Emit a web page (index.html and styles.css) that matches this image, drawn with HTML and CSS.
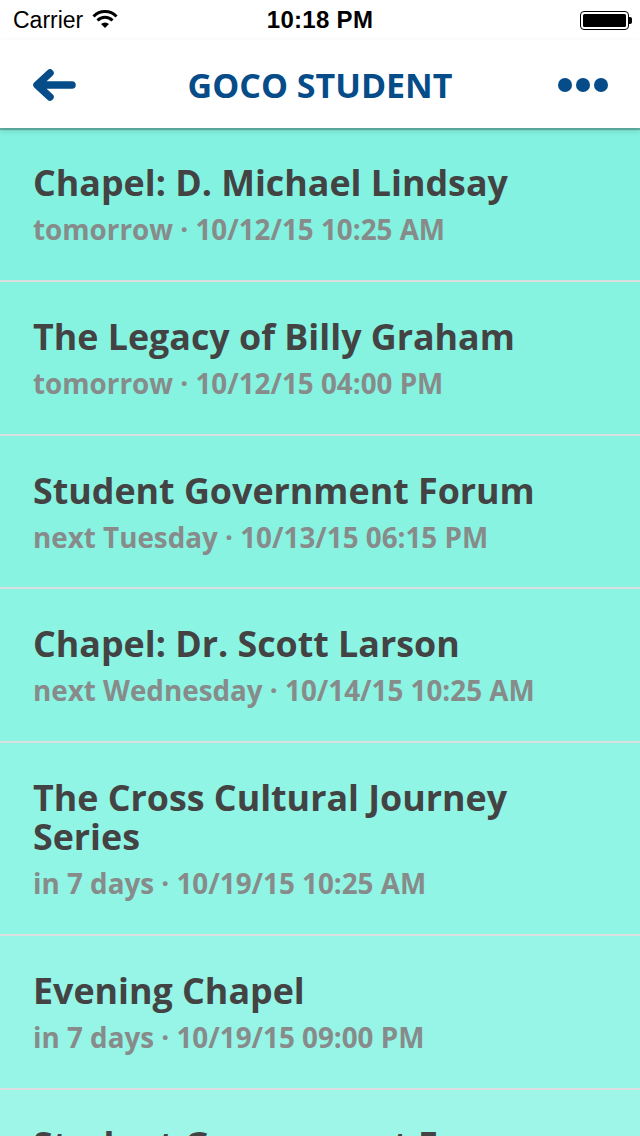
FILE: index.html
```html
<!DOCTYPE html>
<html>
<head>
<meta charset="utf-8">
<link rel="stylesheet" href="styles.css">
</head>
<body>
<div class="screen">
  <div class="statusbar">
    <div class="sb-left">
      <span class="carrier">Carrier</span>
      <svg class="wifi" width="26" height="20" viewBox="0 0 26 20">
        <path d="M13 19 L9 15 A6 6 0 0 1 17 15 Z" fill="#000"/>
        <path d="M5.5 11.5 A10.5 10.5 0 0 1 20.5 11.5" stroke="#000" stroke-width="3" fill="none"/>
        <path d="M1.5 7.5 A16 16 0 0 1 24.5 7.5" stroke="#000" stroke-width="3" fill="none"/>
      </svg>
    </div>
    <div class="sb-time">10:18 PM</div>
    <div class="sb-right">
      <div class="battery"><div class="battery-fill"></div></div>
      <div class="battery-tip"></div>
    </div>
  </div>
  <div class="navbar">
    <svg class="back" width="46" height="34" viewBox="0 0 46 34">
      <path d="M41 17 H7 M19 5 L6 17 L19 29" stroke="#054c89" stroke-width="7.5" stroke-linecap="round" stroke-linejoin="round" fill="none"/>
    </svg>
    <div class="nav-title">GOCO STUDENT</div>
    <div class="dots"><span></span><span></span><span></span></div>
  </div>
  <div class="list">
    <div class="row r1">
      <div class="title">Chapel: D. Michael Lindsay</div>
      <div class="sub">tomorrow · 10/12/15 10:25 AM</div>
    </div>
    <div class="row r2">
      <div class="title">The Legacy of Billy Graham</div>
      <div class="sub">tomorrow · 10/12/15 04:00 PM</div>
    </div>
    <div class="row r3">
      <div class="title">Student Government Forum</div>
      <div class="sub">next Tuesday · 10/13/15 06:15 PM</div>
    </div>
    <div class="row r4">
      <div class="title">Chapel: Dr. Scott Larson</div>
      <div class="sub">next Wednesday · 10/14/15 10:25 AM</div>
    </div>
    <div class="row r5">
      <div class="title">The Cross Cultural Journey Series</div>
      <div class="sub">in 7 days · 10/19/15 10:25 AM</div>
    </div>
    <div class="row r6">
      <div class="title">Evening Chapel</div>
      <div class="sub">in 7 days · 10/19/15 09:00 PM</div>
    </div>
    <div class="row r7">
      <div class="title">Student Government Forum</div>
      <div class="sub">in 7 days · 10/20/15 06:15 PM</div>
    </div>
  </div>
</div>
</body>
</html>
```
FILE: styles.css
```css
* { box-sizing: border-box; }
html, body { margin: 0; padding: 0; }
body { width: 640px; height: 1136px; overflow: hidden; background: #a0f7ea; }
.screen { width: 640px; height: 1136px; overflow: hidden; position: relative; }
.statusbar {
  height: 40px; background: #fff; display: flex; align-items: center;
  justify-content: space-between; padding: 0 8px 0 13px;
  font-family: "Liberation Sans", Arial, sans-serif; font-size: 23px; color: #000;
  position: relative;
}
.sb-left { display: flex; align-items: center; gap: 9px; width: 200px; }
.wifi { margin-top: -2px; }
.sb-time { position: absolute; left: 0; right: 0; text-align: center; font-weight: bold; font-size: 24px; pointer-events: none; letter-spacing: 0.3px; }
.sb-right { display: flex; align-items: center; width: 200px; justify-content: flex-end; }
.battery { width: 49px; height: 19px; border: 1.5px solid #000; border-radius: 4px; padding: 2px; }
.battery-fill { width: 100%; height: 100%; background: #000; border-radius: 1.5px; }
.battery-tip { width: 3px; height: 7px; background: #000; border-radius: 0 2px 2px 0; }
.navbar {
  height: 88px; background: #fff; display: flex; align-items: center; justify-content: space-between;
  padding: 0 32px 0 31px; position: relative; z-index: 2;
  box-shadow: 0 2px 1px rgba(0,0,0,0.25), 0 3px 6px rgba(0,0,0,0.12);
}
.back { margin-top: 2px; }
.nav-title {
  position: absolute; left: 0; right: 0; text-align: center;
  font-family: "Open Sans", sans-serif; font-weight: 700; font-size: 34px; color: #054c89;
  letter-spacing: 0; pointer-events: none; margin-top: 2px;
}
.dots { display: flex; gap: 4px; margin-top: 2px; }
.dots span { width: 14px; height: 14px; border-radius: 50%; background: #054c89; display: block; }
.list { display: flex; flex-direction: column; }
.row {
  padding: 35px 33px 32.75px 33px; border-bottom: 2px solid #dcdfdf;
  font-family: "Open Sans", sans-serif;
}
.title { font-weight: 700; font-size: 35.8px; line-height: 39px; color: #434343; }
.sub { font-weight: 700; font-size: 27.8px; line-height: 36px; color: #878b8a; margin-top: 9px; }
.r1 { background: #83f2e0; }
.r2 { background: #86f3e1; }
.r3 { background: #89f3e2; }
.r4 { background: #8cf4e3; }
.r5 { background: #91f5e5; }
.r6 { background: #96f5e6; }
.r7 { background: #9df6e8; }
```
